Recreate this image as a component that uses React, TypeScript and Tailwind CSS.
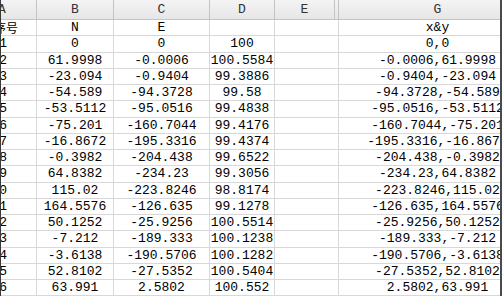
const rows: [string, string, string, string, string][] = [
  ['序号', 'N', 'E', '', 'x&y'],
  ['1', '0', '0', '100', '0,0'],
  ['2', '61.9998', '-0.0006', '100.5584', '-0.0006,61.9998'],
  ['3', '-23.094', '-0.9404', '99.3886', '-0.9404,-23.094'],
  ['4', '-54.589', '-94.3728', '99.58', '-94.3728,-54.589'],
  ['5', '-53.5112', '-95.0516', '99.4838', '-95.0516,-53.5112'],
  ['6', '-75.201', '-160.7044', '99.4176', '-160.7044,-75.201'],
  ['7', '-16.8672', '-195.3316', '99.4374', '-195.3316,-16.8672'],
  ['8', '-0.3982', '-204.438', '99.6522', '-204.438,-0.3982'],
  ['9', '64.8382', '-234.23', '99.3056', '-234.23,64.8382'],
  ['10', '115.02', '-223.8246', '98.8174', '-223.8246,115.02'],
  ['11', '164.5576', '-126.635', '99.1278', '-126.635,164.5576'],
  ['12', '50.1252', '-25.9256', '100.5514', '-25.9256,50.1252'],
  ['13', '-7.212', '-189.333', '100.1238', '-189.333,-7.212'],
  ['14', '-3.6138', '-190.5706', '100.1282', '-190.5706,-3.6138'],
  ['15', '52.8102', '-27.5352', '100.5404', '-27.5352,52.8102'],
  ['16', '63.991', '2.5802', '100.552', '2.5802,63.991'],
];

const cell = 'flex shrink-0 items-center justify-center overflow-hidden whitespace-nowrap border-r border-[#d8d8d8]';
const head = 'flex shrink-0 items-center justify-center border-r border-[#c4c4c4]';

export default function App() {
  return (
    <div className="flex h-[296px] w-[502px] overflow-hidden bg-white font-['Liberation_Mono','Noto_Sans_CJK_SC',monospace] text-[13px] leading-none text-black">
      <div className="h-full w-[500px] overflow-hidden border-l border-[#3a3a3a]">
        <div className="ml-[-33px] w-[570px]">
          <div className="flex h-[20px] border-b border-[#c4c4c4] bg-gradient-to-b from-[#f4f4f4] to-[#e6e6e6] text-[#333]">
            <div className={`${head} w-[69px]`}>A</div>
            <div className={`${head} w-[77px]`}>B</div>
            <div className={`${head} w-[96px]`}>C</div>
            <div className={`${head} w-[65px]`}>D</div>
            <div className={`${head} w-[60px]`}>E</div>
            <div className={`${head} w-[4px]`} />
            <div className={`${head} w-[198px]`}>G</div>
          </div>
          {rows.map((r, i) => (
            <div key={i} className="flex h-[16.25px] border-b border-[#d8d8d8]">
              <div
                className={`${cell} w-[69px] !justify-end ${
                  i === 0 ? "pr-[18px] font-['Noto_Sans_CJK_SC',sans-serif] text-[12px]" : 'pr-[29px]'
                }`}
              >
                {r[0]}
              </div>
              <div className={`${cell} w-[77px]`}>{r[1]}</div>
              <div className={`${cell} w-[96px]`}>{r[2]}</div>
              <div className={`${cell} w-[65px]`}>{r[3]}</div>
              <div className={`${cell} w-[64px]`} />
              <div className={`${cell} w-[198px]`}>{r[4]}</div>
            </div>
          ))}
        </div>
      </div>
      <div className="h-full w-[2px] bg-[#4a4a4a]" />
    </div>
  );
}
